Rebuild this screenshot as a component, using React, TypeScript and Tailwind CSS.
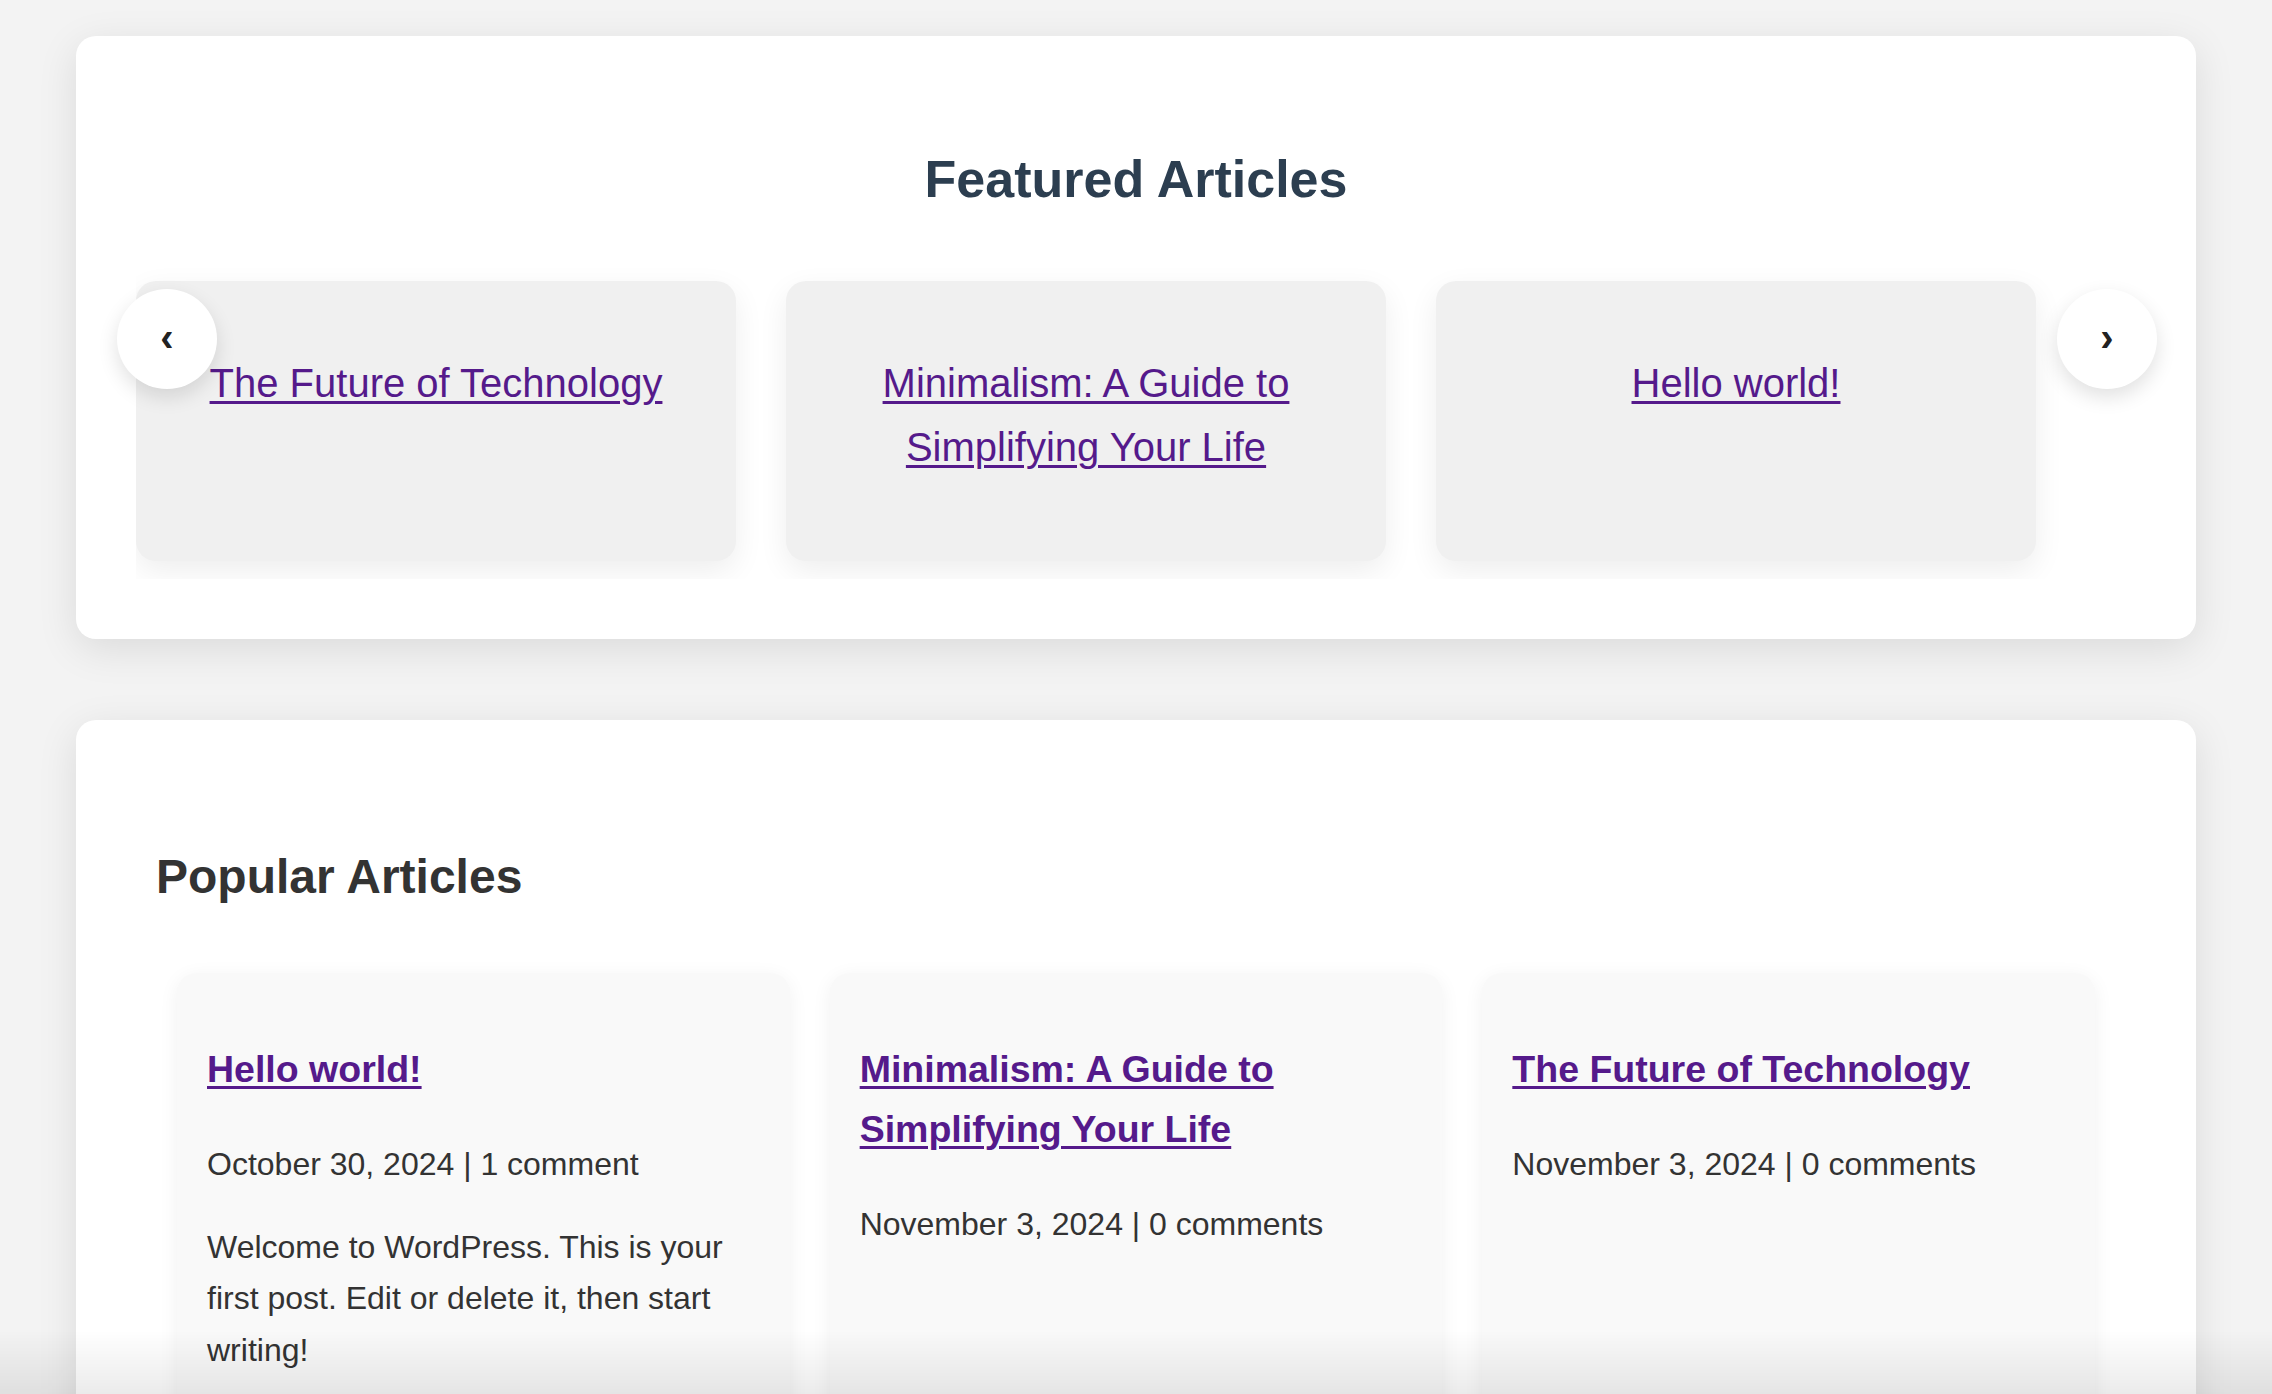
import { ReactNode } from "react";

const featured = [
  "The Future of Technology",
  "Minimalism: A Guide to Simplifying Your Life",
  "Hello world!",
];

const popular = [
  {
    title: "Hello world!",
    meta: "October 30, 2024 | 1 comment",
    excerpt:
      "Welcome to WordPress. This is your first post. Edit or delete it, then start writing!",
  },
  {
    title: "Minimalism: A Guide to Simplifying Your Life",
    meta: "November 3, 2024 | 0 comments",
  },
  {
    title: "The Future of Technology",
    meta: "November 3, 2024 | 0 comments",
  },
];

function Panel({ className, children }: { className: string; children: ReactNode }) {
  return (
    <section
      className={`bg-white rounded-[20px] shadow-[0_10px_40px_rgba(0,0,0,0.1)] ${className}`}
    >
      {children}
    </section>
  );
}

function ArrowButton({ side }: { side: "left" | "right" }) {
  return (
    <button
      className={`absolute top-[26px] ${
        side === "left" ? "left-[-19px]" : "right-[-21px]"
      } z-10 w-[100px] h-[100px] rounded-full bg-white shadow-[0_8px_20px_rgba(0,0,0,0.12)] flex items-center justify-center text-[40px] leading-none font-bold text-[#222]`}
    >
      <span className="-mt-[4px]">{side === "left" ? "‹" : "›"}</span>
    </button>
  );
}

export default function App() {
  return (
    <div className="min-h-screen bg-[#f3f3f3] text-[#333] [font-family:'Liberation_Sans',Arial,sans-serif] leading-[1.6]">
      <main className="max-w-[2120px] mx-auto pt-[36px] pb-[80px] flex flex-col gap-[81px]">
        <Panel className="px-[60px] pt-[60px] pb-[60px]">
          <h2 className="text-center text-[52px] font-bold text-[#2c3e50] mt-[42px] mb-[42px] leading-[1.6]">
            Featured Articles
          </h2>
          <div className="relative">
            <ArrowButton side="left" />
            <div className="overflow-hidden py-[18px]">
              <div className="flex gap-[50px]">
                {featured.map((title) => (
                  <div
                    key={title}
                    className="w-[600px] h-[280px] shrink-0 bg-[#f0f0f0] rounded-[20px] shadow-[0_10px_30px_rgba(0,0,0,0.07)] px-[30px] pt-[70px] text-center"
                  >
                    <a
                      href="#"
                      className="text-[40px] leading-[64px] text-[#551a8b] underline underline-offset-[4px] decoration-[3px]"
                    >
                      {title}
                    </a>
                  </div>
                ))}
              </div>
            </div>
            <ArrowButton side="right" />
          </div>
        </Panel>

        <Panel className="p-[80px]">
          <h2 className="text-[48px] font-bold text-[#333] mt-[39px] mb-[40px] leading-[1.6]">
            Popular Articles
          </h2>
          <div className="grid grid-cols-3 gap-[40px] px-[21px] pt-[17px] pb-[20px]">
            {popular.map((post) => (
              <article
                key={post.title}
                className="bg-[#f9f9f9] rounded-[20px] shadow-[0_4px_20px_rgba(0,0,0,0.06)] px-[30px] pt-[30px] pb-[30px]"
              >
                <h3 className="text-[37.5px] font-bold leading-[1.6] mt-[36px] mb-[40px]">
                  <a
                    href="#"
                    className="text-[#551a8b] underline underline-offset-[4px] decoration-[3px]"
                  >
                    {post.title}
                  </a>
                </h3>
                <p className="text-[32px] leading-[1.6] my-[32px] text-[#333]">{post.meta}</p>
                {post.excerpt && (
                  <p className="text-[32px] leading-[1.6] my-[32px] text-[#333]">{post.excerpt}</p>
                )}
              </article>
            ))}
          </div>
        </Panel>
      </main>
      <div className="fixed inset-x-0 bottom-0 h-[64px] pointer-events-none bg-gradient-to-t from-[rgba(0,0,0,0.08)] to-transparent" />
    </div>
  );
}
